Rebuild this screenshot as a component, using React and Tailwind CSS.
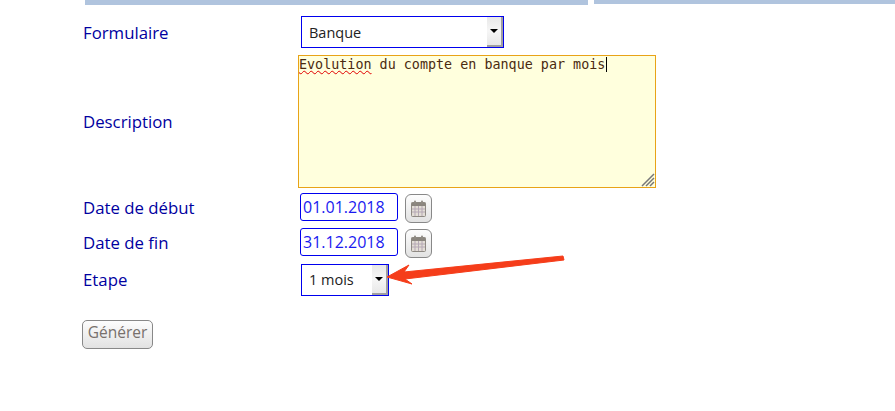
function SelectBox({ label, className, textClass }) {
  return (
    <div className={`flex items-stretch border border-[#0000ee] bg-white ${className}`}>
      <span className={`flex-1 pl-[7px] flex items-center text-[14.5px] text-[#222] font-['Open_Sans',sans-serif] ${textClass}`}>{label}</span>
      <span className="w-[16px] flex items-center justify-center bg-gradient-to-b from-[#e8e8e8] via-[#f6f6f6] to-[#e8e8e8] border-r-2 border-b-2 border-r-[#a0a0a0] border-b-[#a0a0a0]">
        <span className="w-0 h-0 border-x-[4px] border-x-transparent border-t-[4px] border-t-black" />
      </span>
    </div>
  )
}

function CalendarButton() {
  return (
    <button className="w-[27px] h-[29px] ml-[7px] mt-[1px] flex items-center justify-center rounded-[6px] border border-[#888] bg-gradient-to-b from-[#fdfdfd] to-[#e2e2e2]">
      <svg width="15" height="17" viewBox="0 0 15 17">
        <rect x="0.5" y="2.5" width="14" height="14" rx="1" fill="#e3ded6" stroke="#8f8a83" />
        <rect x="0.5" y="2.5" width="14" height="3.5" fill="#8a857e" />
        <rect x="3" y="0.5" width="2" height="4" rx="1" fill="#8f8a83" />
        <rect x="10" y="0.5" width="2" height="4" rx="1" fill="#8f8a83" />
        <path d="M1 9h13M1 12h13M4 6v10M7.5 6v10M11 6v10" stroke="#b5a8b5" strokeWidth="1" fill="none" />
      </svg>
    </button>
  )
}

function DateRow({ label, value, className }) {
  return (
    <div className={`flex items-start ${className}`}>
      <label className="w-[217px] pt-[3px] text-[16.8px] leading-[24px] text-[#0000a0]">{label}</label>
      <div className="w-[98px] h-[28px] flex items-center pl-[2px] rounded-[3px] border border-[#0000ee] bg-white text-[16px] text-[#1a1af0]">
        {value}
      </div>
      <CalendarButton />
    </div>
  )
}

export default function App() {
  return (
    <div className="relative w-[895px] h-[411px] bg-white overflow-hidden font-['Open_Sans',sans-serif]">
      <div className="flex items-start pl-[85px]">
        <div className="w-[503px] h-[5px] bg-[#b0c4de]" />
        <div className="w-[301px] h-[4px] ml-[6px] bg-[#b0c4de]" />
      </div>

      <div className="pl-[83px] pt-[11px]">
        <div className="flex items-center h-[32px]">
          <label className="w-[218px] pt-[2px] text-[16.8px] text-[#0000a0]">Formulaire</label>
          <SelectBox label="Banque" className="w-[203px] h-[32px]" textClass="pt-[2px]" />
        </div>

        <div className="flex items-center mt-[7px]">
          <label className="w-[215px] text-[16.8px] text-[#0000a0]">Description</label>
          <div className="relative w-[358px] h-[133px] border border-[#e8a317] bg-[#ffffdd] pl-[0px] pt-[1px] text-[13.4px] leading-[16px] text-[#4a2a10] font-['DejaVu_Sans_Mono',monospace]">
            <span className="underline decoration-wavy decoration-[#e00000] decoration-1">Evolution</span>
            <span className="border-r border-black pr-[1px]"> du compte en banque par mois</span>
            <svg className="absolute right-0 bottom-0" width="14" height="14" viewBox="0 0 14 14">
              <path d="M1 13L13 1M5 13L13 5M9 13L13 9" stroke="#777" strokeWidth="1.5" fill="none" />
            </svg>
          </div>
        </div>

        <DateRow label="Date de début" value="01.01.2018" className="mt-[5px] h-[30px]" />
        <DateRow label="Date de fin" value="31.12.2018" className="mt-[5px] h-[30px]" />

        <div className="flex items-center h-[32px] mt-[6px]">
          <label className="w-[218px] text-[16.8px] text-[#0000a0]">Etape</label>
          <SelectBox label="1 mois" className="w-[88px] h-[32px]" />
        </div>

        <button className="block -ml-[1px] mt-[24px] w-[71px] h-[29px] rounded-[5px] border border-[#888] bg-gradient-to-b from-[#fdfdfd] to-[#e2e2e2] text-[15.5px] pb-[3px] text-[#77706c]">
          Générer
        </button>
      </div>

      {/* annotation arrow drawn on top of the screenshot */}
      <svg className="absolute left-0 top-0 pointer-events-none" width="895" height="411" viewBox="0 0 895 411">
        <path d="M387 277L409 265L404 272L563 256L564 260L405 279L412 284Z" fill="#f53d1a" stroke="#f53d1a" strokeWidth="1" strokeLinejoin="round" />
      </svg>
    </div>
  )
}
